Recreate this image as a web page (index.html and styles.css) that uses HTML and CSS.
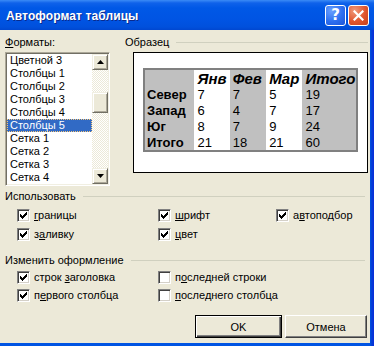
FILE: index.html
```html
<!DOCTYPE html>
<html lang="ru">
<head>
<meta charset="utf-8">
<title>Автоформат таблицы</title>
<link rel="stylesheet" href="styles.css">
</head>
<body>
<div class="window">
  <div class="titlebar">
    <span class="title">Автоформат таблицы</span>
    <div class="tbtns">
      <span class="tbtn help">?</span>
      <span class="tbtn close"><svg width="11" height="11" viewBox="0 0 11 11"><path d="M1.5 1.5 L9.5 9.5 M9.5 1.5 L1.5 9.5" stroke="#fff" stroke-width="2.2" stroke-linecap="square"/></svg></span>
    </div>
  </div>
  <div class="client">
    <div class="top">
      <div class="formats">
        <div class="lbl"><u>Ф</u>орматы:</div>
        <div class="listbox">
          <ul class="items">
            <li>Цветной 3</li>
            <li>Столбцы 1</li>
            <li>Столбцы 2</li>
            <li>Столбцы 3</li>
            <li>Столбцы 4</li>
            <li class="sel">Столбцы 5</li>
            <li>Сетка 1</li>
            <li>Сетка 2</li>
            <li>Сетка 3</li>
            <li>Сетка 4</li>
          </ul>
          <div class="vscroll">
            <div class="sbtn"><svg width="7" height="4" viewBox="0 0 7 4"><path d="M3.5 0 L7 4 L0 4 Z" fill="#000"/></svg></div>
            <div class="track"><div class="thumb"></div></div>
            <div class="sbtn"><svg width="7" height="4" viewBox="0 0 7 4"><path d="M0 0 L7 0 L3.5 4 Z" fill="#000"/></svg></div>
          </div>
        </div>
      </div>
      <div class="sample">
        <div class="grouphead indent"><span>Образец</span><i class="rule"></i></div>
        <div class="preview">
          <table class="demo">
            <colgroup><col class="c0"><col class="c1"><col class="c2"><col class="c3"><col class="c4"></colgroup>
            <tr class="hdr"><td class="g"></td><td class="w">Янв</td><td class="g">Фев</td><td class="w">Мар</td><td class="g">Итого</td></tr>
            <tr><td class="g b">Север</td><td class="w">7</td><td class="g">7</td><td class="w">5</td><td class="g">19</td></tr>
            <tr><td class="g b">Запад</td><td class="w">6</td><td class="g">4</td><td class="w">7</td><td class="g">17</td></tr>
            <tr><td class="g b">Юг</td><td class="w">8</td><td class="g">7</td><td class="w">9</td><td class="g">24</td></tr>
            <tr class="last"><td class="g b">Итого</td><td class="w">21</td><td class="g">18</td><td class="w">21</td><td class="g">60</td></tr>
          </table>
        </div>
      </div>
    </div>

    <div class="grouphead sec1"><span>Использовать</span><i class="rule"></i></div>
    <div class="checks use">
      <label class="chk"><span class="cb on"></span><span><u>г</u>раницы</span></label>
      <label class="chk"><span class="cb on"></span><span><u>ш</u>рифт</span></label>
      <label class="chk"><span class="cb on"></span><span>а<u>в</u>топодбор</span></label>
      <label class="chk"><span class="cb on"></span><span>з<u>а</u>ливку</span></label>
      <label class="chk"><span class="cb on"></span><span><u>ц</u>вет</span></label>
    </div>

    <div class="grouphead sec2"><span>Изменить оформление</span><i class="rule"></i></div>
    <div class="checks modify">
      <label class="chk"><span class="cb on"></span><span>строк <u>з</u>аголовка</span></label>
      <label class="chk"><span class="cb"></span><span>п<u>о</u>следней строки</span></label>
      <label class="chk"><span class="cb on"></span><span>п<u>е</u>рвого столбца</span></label>
      <label class="chk"><span class="cb"></span><span><u>п</u>оследнего столбца</span></label>
    </div>

    <div class="buttons">
      <button class="btn default">OK</button>
      <button class="btn">Отмена</button>
    </div>
  </div>
</div>
</body>
</html>
```

FILE: styles.css
```css
* { box-sizing: border-box; }
html, body { margin: 0; padding: 0; }
body {
  width: 374px;
  height: 346px;
  overflow: hidden;
  font-family: "Liberation Sans", Arial, sans-serif;
  font-size: 11px;
  color: #000;
  background: #0054e3;
}
u { text-decoration: underline; text-underline-offset: 1px; }

.window {
  width: 374px;
  height: 346px;
  display: flex;
  flex-direction: column;
  background: linear-gradient(to right, #0054e3 0, #0054e3 370px, #0046d6 371px, #0831d9 373px);
}

.titlebar {
  height: 30px;
  flex: none;
  display: flex;
  align-items: center;
  justify-content: space-between;
  padding: 0 5px 0 6px;
  background: linear-gradient(#3b8bf6 0, #0f62ea 3px, #0058e6 8px, #0054e3 20px, #0050dc 27px, #0047d0 30px);
}
.title {
  font-family: "Liberation Sans", Arial, sans-serif;
  font-weight: bold;
  font-size: 12px;
  letter-spacing: 0.1px;
  color: #fff;
  text-shadow: 1px 1px #0a2a8c;
  margin-top: 1px;
}
.tbtns { display: flex; gap: 2px; margin-top: 1px; }
.tbtn {
  width: 21px;
  height: 21px;
  border: 1px solid #fff;
  border-radius: 3px;
  display: flex;
  align-items: center;
  justify-content: center;
  color: #fff;
}
.help {
  background: radial-gradient(circle at 30% 25%, #6aa0ff 0, #2d6ff0 55%, #1c55d8 100%);
  font-family: "DejaVu Sans", sans-serif;
  font-weight: bold;
  font-size: 15px;
  line-height: 1;
}
.close {
  background: radial-gradient(circle at 30% 25%, #f09a7c 0, #e0552e 55%, #c5401b 100%);
}

.client {
  flex: 1;
  margin: 0 4px 3px 0;
  background: #ece9d8;
  padding: 6px 2px 0 5px;
  display: flex;
  flex-direction: column;
}

.top { display: flex; flex: none; }
.formats { width: 105px; flex: none; }
.lbl { height: 13px; line-height: 13px; margin-bottom: 3px; }

.listbox {
  height: 134px;
  display: flex;
  background: #fff;
  border: 1px solid;
  border-color: #aca899 #fff #fff #aca899;
  box-shadow: inset 1px 1px #716f64, inset -1px -1px #f1efe2;
  padding: 1px;
}
.items {
  list-style: none;
  margin: 0;
  padding: 0;
  flex: 1;
  overflow: hidden;
}
.items li {
  height: 13px;
  line-height: 13px;
  padding-left: 3px;
  white-space: nowrap;
}
.items li.sel {
  background: #316ac5;
  color: #fff;
  outline: 1px dotted #f6c77a;
  outline-offset: -1px;
}

.vscroll { width: 16px; flex: none; display: flex; flex-direction: column; }
.sbtn {
  height: 16px;
  flex: none;
  background: #ece9d8;
  border: 1px solid;
  border-color: #f1efe2 #716f64 #716f64 #f1efe2;
  box-shadow: inset 1px 1px #fff, inset -1px -1px #aca899;
  display: flex;
  align-items: center;
  justify-content: center;
}
.track {
  flex: 1;
  background: repeating-conic-gradient(#fff 0 25%, #ece9d8 0 50%) 0 0 / 2px 2px;
}
.thumb {
  margin-top: 22px;
  height: 21px;
  background: #ece9d8;
  border: 1px solid;
  border-color: #f1efe2 #716f64 #716f64 #f1efe2;
  box-shadow: inset 1px 1px #fff, inset -1px -1px #aca899;
}

.sample { flex: 1; margin-left: 10px; }
.grouphead {
  display: flex;
  align-items: center;
  height: 13px;
  line-height: 13px;
  flex: none;
}
.grouphead .rule {
  flex: 1;
  height: 1px;
  background: #d0d0bf;
  margin-left: 7px;
}
.indent { padding-left: 5px; margin-bottom: 3px; }

.preview {
  margin-left: 13px;
  height: 121px;
  border: 1px solid #000;
  background: #fff;
  padding: 15px 0 0 9px;
}

.demo {
  border-collapse: collapse;
  table-layout: fixed;
  width: 215px;
  border: 2px solid #808080;
  font-family: "Liberation Sans", Arial, sans-serif;
  font-size: 13px;
}
.demo .c0 { width: 50px; }
.demo .c1 { width: 35px; }
.demo .c2 { width: 36px; }
.demo .c3 { width: 36px; }
.demo .c4 { width: 54px; }
.demo td {
  padding: 0 0 0 3px;
  height: 16px;
  line-height: 16px;
  white-space: nowrap;
  overflow: hidden;
  vertical-align: middle;
}
.demo td.g { background: #c0c0c0; }
.demo td.w { background: #fff; }
.demo td.b { font-weight: bold; padding-left: 2px; }
.demo tr.hdr td {
  height: 17px;
  line-height: 17px;
  font-weight: bold;
  font-style: italic;
  font-size: 15px;
}
.demo tr.last td { height: 15px; line-height: 15px; }

.sec1 { margin-top: 4px; margin-right: 3px; }
.sec2 { margin-top: 13px; margin-right: 3px; }

.checks {
  display: grid;
  grid-template-columns: 141px 118px auto;
  padding-left: 12px;
  flex: none;
}
.use { margin-top: 6px; row-gap: 6px; }
.modify { margin-top: 4px; row-gap: 5px; grid-template-columns: 141px auto; }

.chk {
  display: flex;
  align-items: center;
  height: 13px;
  line-height: 13px;
  gap: 4px;
  white-space: nowrap;
}
.cb {
  width: 13px;
  height: 13px;
  flex: none;
  background: #fff;
  border: 1px solid;
  border-color: #808080 #fff #fff #808080;
  box-shadow: inset 1px 1px #404040, inset -1px -1px #d4d0c8;
  position: relative;
}
.cb.on::after {
  content: "";
  position: absolute;
  left: 2px;
  top: 2px;
  width: 7px;
  height: 7px;
  background: url("data:image/svg+xml;utf8,<svg xmlns='http://www.w3.org/2000/svg' width='7' height='7' viewBox='0 0 7 7' shape-rendering='crispEdges'><path d='M0 2h1v3h-1z M1 3h1v3h-1z M2 4h1v3h-1z M3 3h1v3h-1z M4 2h1v3h-1z M5 1h1v3h-1z M6 0h1v3h-1z' fill='black'/></svg>") no-repeat;
}

.buttons {
  display: flex;
  justify-content: flex-end;
  gap: 3px;
  margin-top: 13px;
  padding-right: 1px;
}
.btn {
  height: 23px;
  width: 82px;
  font-family: "Liberation Sans", Arial, sans-serif;
  font-size: 11px;
  color: #000;
  background: #ece9d8;
  border: 1px solid;
  border-color: #fff #404040 #404040 #fff;
  box-shadow: inset -1px -1px #808080;
  padding: 0;
}
.btn.default {
  width: 87px;
  border-color: #000;
  box-shadow: inset 1px 1px #fff, inset -1px -1px #404040, inset -2px -2px #808080;
}
```
